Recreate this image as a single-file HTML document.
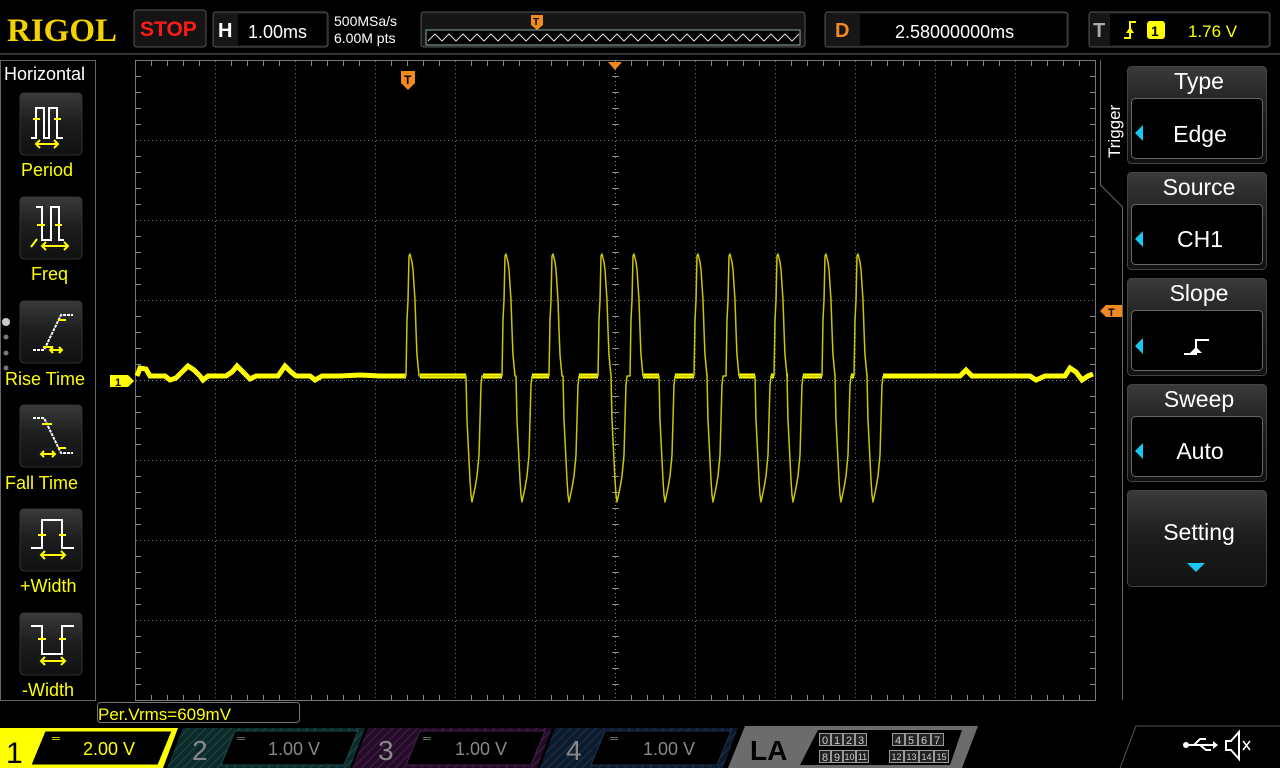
<!DOCTYPE html>
<html><head><meta charset="utf-8"><style>
html,body{margin:0;padding:0;background:#000;width:1280px;height:768px;overflow:hidden}
svg{display:block}
text{font-family:"Liberation Sans",sans-serif}
</style></head><body>
<svg width="1280" height="768" viewBox="0 0 1280 768" xmlns="http://www.w3.org/2000/svg">
<defs>
<linearGradient id="btn" x1="0" y1="0" x2="0" y2="1"><stop offset="0" stop-color="#3a3a3a"/><stop offset="0.5" stop-color="#1c1c1c"/><stop offset="1" stop-color="#111"/></linearGradient>
<pattern id="h2" width="6" height="6" patternUnits="userSpaceOnUse" patternTransform="rotate(45)"><rect width="6" height="6" fill="#0c2a2a"/><line x1="0" y1="0" x2="0" y2="6" stroke="#1d4a48" stroke-width="2"/></pattern>
<pattern id="h3" width="6" height="6" patternUnits="userSpaceOnUse" patternTransform="rotate(45)"><rect width="6" height="6" fill="#240c28"/><line x1="0" y1="0" x2="0" y2="6" stroke="#45204a" stroke-width="2"/></pattern>
<pattern id="h4" width="6" height="6" patternUnits="userSpaceOnUse" patternTransform="rotate(45)"><rect width="6" height="6" fill="#0c1a2c"/><line x1="0" y1="0" x2="0" y2="6" stroke="#1c3250" stroke-width="2"/></pattern>
<clipPath id="zz"><rect x="427" y="30" width="372" height="15"/></clipPath>
</defs>
<rect width="1280" height="768" fill="#000"/>

<!-- TOP BAR -->
<text x="7" y="41" style="font-family:'Liberation Serif',serif;font-weight:bold;font-size:33px" fill="#f2d200">RIGOL</text>
<rect x="134" y="10" width="72" height="37" rx="3" fill="#141414" stroke="#555"/>
<text x="140" y="36" font-size="21" font-weight="bold" fill="#ff1a1a">STOP</text>
<rect x="213" y="12" width="115" height="35" rx="3" fill="#161616" stroke="#555"/>
<rect x="238" y="14" width="88" height="31" fill="#000"/>
<text x="218" y="37" font-size="20" font-weight="bold" fill="#fff">H</text>
<text x="248" y="38" font-size="18" fill="#fff">1.00ms</text>
<text x="334" y="26" font-size="14" fill="#fff">500MSa/s</text>
<text x="334" y="43" font-size="14" fill="#fff">6.00M pts</text>
<rect x="421" y="12" width="384" height="35" rx="3" fill="#161616" stroke="#555"/>
<rect x="426" y="30" width="374" height="15" fill="#000" stroke="#8aa"/>
<g clip-path="url(#zz)">
<path d="M428,41 l7,-7 l7,7 l7,-7 l7,7 l7,-7 l7,7 l7,-7 l7,7 l7,-7 l7,7 l7,-7 l7,7 l7,-7 l7,7 l7,-7 l7,7 l7,-7 l7,7 l7,-7 l7,7 l7,-7 l7,7 l7,-7 l7,7 l7,-7 l7,7 l7,-7 l7,7 l7,-7 l7,7 l7,-7 l7,7 l7,-7 l7,7 l7,-7 l7,7 l7,-7 l7,7 l7,-7 l7,7 l7,-7 l7,7 l7,-7 l7,7 l7,-7 l7,7 l7,-7 l7,7 l7,-7 l7,7 l7,-7 l7,7 l7,-7 l7,7 l7,-7 l7,7" fill="none" stroke="#ddd" stroke-width="1"/>
</g>
<path d="M531,15 h12 v10 l-6,5 l-6,-5z" fill="#f08a20"/><text x="533" y="25" font-size="10" font-weight="bold" fill="#000">T</text>
<rect x="825" y="12" width="243" height="35" rx="3" fill="#161616" stroke="#555"/>
<rect x="860" y="14" width="206" height="31" fill="#000"/>
<text x="835" y="37" font-size="20" font-weight="bold" fill="#f08a20">D</text>
<text x="895" y="38" font-size="18" fill="#fff">2.58000000ms</text>
<rect x="1089" y="12" width="181" height="35" rx="3" fill="#161616" stroke="#555"/>
<rect x="1110" y="14" width="158" height="31" fill="#000"/>
<text x="1093" y="37" font-size="20" font-weight="bold" fill="#aaa">T</text>
<path d="M1124,38 h6 v-16 h6" stroke="#ff0" stroke-width="2" fill="none"/>
<path d="M1126,33 l4,-6 l4,6z" fill="#ff0"/>
<rect x="1147" y="21" width="18" height="18" rx="3" fill="#ff0"/><text x="1151" y="36" font-size="14" font-weight="bold" fill="#000">1</text>
<text x="1188" y="37" font-size="17" fill="#ff0">1.76 V</text>
<line x1="0" y1="54" x2="1280" y2="54" stroke="#333" stroke-width="2"/>

<!-- LEFT PANEL -->
<rect x="0.5" y="60.5" width="95" height="640" fill="#000" stroke="#666"/>
<text x="4" y="80" font-size="18" fill="#fff">Horizontal</text>
<g>
<rect x="20" y="93" width="62" height="62" rx="4" fill="url(#btn)" stroke="#333"/>
<path d="M31,138 h5 v-30 h8 v30 h5 v-30 h8 v30 h6" fill="none" stroke="#fff" stroke-width="2"/>
<path d="M33,119 h7 M54,119 h7 M37,144 h20 M40,140 l-4,4 l4,4 M54,140 l4,4 l-4,4" stroke="#ff0" stroke-width="2" fill="none"/>
<text x="21" y="176" font-size="18" fill="#ff0">Period</text>

<rect x="20" y="197" width="62" height="62" rx="4" fill="url(#btn)" stroke="#333"/>
<path d="M36,207 h6 v33 h9 v-33 h8 v33 h5" fill="none" stroke="#fff" stroke-width="2"/>
<path d="M37,225 h8 M55,225 h7 M43,246 h24 M46,242 l-4,4 l4,4 M64,242 l4,4 l-4,4 M31,247 l6,-8" stroke="#ff0" stroke-width="2" fill="none"/>
<text x="31" y="280" font-size="18" fill="#ff0">Freq</text>

<rect x="20" y="301" width="62" height="62" rx="4" fill="url(#btn)" stroke="#333"/>
<path d="M33,350 h11 l17,-35 h12" fill="none" stroke="#fff" stroke-width="2" stroke-dasharray="3,1"/>
<path d="M43,347 h10 M58,320 h8 M50,350 h12 M53,347 l-3,3 l3,3 M59,347 l3,3 l-3,3" stroke="#ff0" stroke-width="2" fill="none"/>
<text x="5" y="385" font-size="18" fill="#ff0">Rise Time</text>
<circle cx="6" cy="322" r="4" fill="#ccc"/><circle cx="6" cy="337" r="2.5" fill="#777"/><circle cx="6" cy="353" r="2.5" fill="#777"/><circle cx="6" cy="368" r="2.5" fill="#777"/>

<rect x="20" y="405" width="62" height="62" rx="4" fill="url(#btn)" stroke="#333"/>
<path d="M33,418 h11 l17,35 h12" fill="none" stroke="#fff" stroke-width="2" stroke-dasharray="3,1"/>
<path d="M42,424 h10 M58,448 h8 M41,454 h14 M44,451 l-3,3 l3,3 M52,451 l3,3 l-3,3" stroke="#ff0" stroke-width="2" fill="none"/>
<text x="5" y="489" font-size="18" fill="#ff0">Fall Time</text>

<rect x="20" y="509" width="62" height="62" rx="4" fill="url(#btn)" stroke="#333"/>
<path d="M31,548 h11 v-28 h20 v28 h12" fill="none" stroke="#fff" stroke-width="2"/>
<path d="M38,535 h8 M59,535 h7 M42,555 h22 M45,551 l-4,4 l4,4 M61,551 l4,4 l-4,4" stroke="#ff0" stroke-width="2" fill="none"/>
<text x="20" y="592" font-size="18" fill="#ff0">+Width</text>

<rect x="20" y="613" width="62" height="62" rx="4" fill="url(#btn)" stroke="#333"/>
<path d="M31,626 h11 v28 h20 v-28 h12" fill="none" stroke="#fff" stroke-width="2"/>
<path d="M38,639 h8 M59,639 h7 M42,661 h22 M45,657 l-4,4 l4,4 M61,657 l4,4 l-4,4" stroke="#ff0" stroke-width="2" fill="none"/>
<text x="22" y="696" font-size="18" fill="#ff0">-Width</text>
</g>

<!-- GRID -->
<rect x="135.5" y="60.5" width="960" height="640" fill="none" stroke="#777"/>
<g stroke="#6a6a6a" stroke-width="1" stroke-dasharray="1,3">
<path d="M215.5,61v639M295.5,61v639M375.5,61v639M455.5,61v639M535.5,61v639M695.5,61v639M775.5,61v639M855.5,61v639M935.5,61v639M1015.5,61v639"/>
<path d="M136,140.5h959M136,220.5h959M136,300.5h959M136,460.5h959M136,540.5h959M136,620.5h959"/>
</g>
<g stroke="#888" stroke-width="1">
<path d="M615.5,61v639M136,380.5h959" stroke-dasharray="1,3"/>
</g>
<g stroke="#888" stroke-width="1">
<path d="M151.5,61v5M167.5,61v5M183.5,61v5M199.5,61v5M231.5,61v5M247.5,61v5M263.5,61v5M279.5,61v5M311.5,61v5M327.5,61v5M343.5,61v5M359.5,61v5M391.5,61v5M407.5,61v5M423.5,61v5M439.5,61v5M471.5,61v5M487.5,61v5M503.5,61v5M519.5,61v5M551.5,61v5M567.5,61v5M583.5,61v5M599.5,61v5M631.5,61v5M647.5,61v5M663.5,61v5M679.5,61v5M711.5,61v5M727.5,61v5M743.5,61v5M759.5,61v5M791.5,61v5M807.5,61v5M823.5,61v5M839.5,61v5M871.5,61v5M887.5,61v5M903.5,61v5M919.5,61v5M951.5,61v5M967.5,61v5M983.5,61v5M999.5,61v5M1031.5,61v5M1047.5,61v5M1063.5,61v5M1079.5,61v5"/>
<path d="M151.5,695v5M167.5,695v5M183.5,695v5M199.5,695v5M231.5,695v5M247.5,695v5M263.5,695v5M279.5,695v5M311.5,695v5M327.5,695v5M343.5,695v5M359.5,695v5M391.5,695v5M407.5,695v5M423.5,695v5M439.5,695v5M471.5,695v5M487.5,695v5M503.5,695v5M519.5,695v5M551.5,695v5M567.5,695v5M583.5,695v5M599.5,695v5M631.5,695v5M647.5,695v5M663.5,695v5M679.5,695v5M711.5,695v5M727.5,695v5M743.5,695v5M759.5,695v5M791.5,695v5M807.5,695v5M823.5,695v5M839.5,695v5M871.5,695v5M887.5,695v5M903.5,695v5M919.5,695v5M951.5,695v5M967.5,695v5M983.5,695v5M999.5,695v5M1031.5,695v5M1047.5,695v5M1063.5,695v5M1079.5,695v5"/>
<path d="M136,76.5h5M136,92.5h5M136,108.5h5M136,124.5h5M136,156.5h5M136,172.5h5M136,188.5h5M136,204.5h5M136,236.5h5M136,252.5h5M136,268.5h5M136,284.5h5M136,316.5h5M136,332.5h5M136,348.5h5M136,364.5h5M136,396.5h5M136,412.5h5M136,428.5h5M136,444.5h5M136,476.5h5M136,492.5h5M136,508.5h5M136,524.5h5M136,556.5h5M136,572.5h5M136,588.5h5M136,604.5h5M136,636.5h5M136,652.5h5M136,668.5h5M136,684.5h5"/>
<path d="M1090,76.5h5M1090,92.5h5M1090,108.5h5M1090,124.5h5M1090,156.5h5M1090,172.5h5M1090,188.5h5M1090,204.5h5M1090,236.5h5M1090,252.5h5M1090,268.5h5M1090,284.5h5M1090,316.5h5M1090,332.5h5M1090,348.5h5M1090,364.5h5M1090,396.5h5M1090,412.5h5M1090,428.5h5M1090,444.5h5M1090,476.5h5M1090,492.5h5M1090,508.5h5M1090,524.5h5M1090,556.5h5M1090,572.5h5M1090,588.5h5M1090,604.5h5M1090,636.5h5M1090,652.5h5M1090,668.5h5M1090,684.5h5"/>
<path d="M612,76.5h7M612,92.5h7M612,108.5h7M612,124.5h7M612,156.5h7M612,172.5h7M612,188.5h7M612,204.5h7M612,236.5h7M612,252.5h7M612,268.5h7M612,284.5h7M612,316.5h7M612,332.5h7M612,348.5h7M612,364.5h7M612,396.5h7M612,412.5h7M612,428.5h7M612,444.5h7M612,476.5h7M612,492.5h7M612,508.5h7M612,524.5h7M612,556.5h7M612,572.5h7M612,588.5h7M612,604.5h7M612,636.5h7M612,652.5h7M612,668.5h7M612,684.5h7"/>
</g>

<!-- markers -->
<path d="M608,62 h14 l-7,8z" fill="#f08a20"/>
<path d="M401,71 h14 v12 l-7,7 l-7,-7z" fill="#f08a20"/><text x="404" y="84" font-size="12" font-weight="bold" fill="#000">T</text>
<path d="M1122,305 h-16 l-6,6 l6,6 h16z" fill="#f08a20"/><text x="1108" y="316" font-size="11" font-weight="bold" fill="#000">T</text>
<path d="M110,375 h18 l6,6 l-6,6 h-18z" fill="#ff0"/><text x="115" y="386" font-size="11" font-weight="bold" fill="#000">1</text>

<!-- WAVEFORM -->
<path d="M137,376 L140,368 L146,369 L150,376 L165,376 L170,380 L176,378 L182,372 L188,366 L194,370 L200,376 L203,380 L208,376 L226,376 L232,372 L237,366 L243,372 L250,379 L256,376 L278,376 L285,366 L291,372 L296,376 L310,376 L315,380 L322,376 L340,376 L360,375 L380,376 L404,376 L406,376" fill="none" stroke="#ff0" stroke-width="5"/>
<path d="M420,376 L466,376 M483,376 L502,376 M532,376 L549,376 M579,376 L598,376 M643,376 L659,376 M675,376 L694,376 M739,376 L755,376 M771,376 L774,376 M787,376 L788,376 M803,376 L822,376 M851,376 L854,376 M883,376 L960,376 L966,370 L972,376 L1030,376 L1036,380 L1045,376 L1065,376 L1070,368 L1076,372 L1082,380 L1088,376 L1093,374" fill="none" stroke="#ff0" stroke-width="5"/>
<path fill="none" stroke="#c8c800" stroke-width="1.5" stroke-linejoin="round" d="M404,376 L406,376 L407,320 L408,300 L409,256 L410,254 L412,262 L413,270 L415,300 L416,330 L417,355 L419,376
L466,376 L467,420 L468,440 L470,480 L471,495 L472,502 L475,488 L477,476 L479,455 L480,420 L481,385 L482,376
L502,376 L503,320 L504,300 L505,256 L506,254 L508,262 L509,270 L511,300 L512,330 L513,355 L515,376
L516,376 L517,420 L518,440 L520,480 L521,495 L522,502 L525,488 L527,476 L529,455 L530,420 L531,385 L532,376
L549,376 L550,320 L551,300 L552,256 L553,254 L555,262 L556,270 L558,300 L559,330 L560,355 L562,376
L563,376 L564,420 L565,440 L567,480 L568,495 L569,502 L572,488 L574,476 L576,455 L577,420 L578,385 L579,376
L598,376 L599,320 L600,300 L601,256 L602,254 L604,262 L605,270 L607,300 L608,330 L609,355 L611,376
L612,420 L613,440 L615,480 L616,495 L617,502 L620,488 L622,476 L624,455 L625,420 L626,385 L627,376
L630,376 L631,320 L632,300 L633,256 L634,254 L636,262 L637,270 L639,300 L640,330 L641,355 L643,376
L659,376 L660,420 L661,440 L663,480 L664,495 L665,502 L668,488 L670,476 L672,455 L673,420 L674,385 L675,376
L694,376 L695,320 L696,300 L697,256 L698,254 L700,262 L701,270 L703,300 L704,330 L705,355 L707,376
L708,420 L709,440 L711,480 L712,495 L713,502 L716,488 L718,476 L720,455 L721,420 L722,385 L723,376
L726,376 L727,320 L728,300 L729,256 L730,254 L732,262 L733,270 L735,300 L736,330 L737,355 L739,376
L755,376 L756,420 L757,440 L759,480 L760,495 L761,502 L764,488 L766,476 L768,455 L769,420 L770,385 L771,376
L774,376 L775,320 L776,300 L777,256 L778,254 L780,262 L781,270 L783,300 L784,330 L785,355 L787,376
L788,420 L789,440 L791,480 L792,495 L793,502 L796,488 L798,476 L800,455 L801,420 L802,385 L803,376
L822,376 L823,320 L824,300 L825,256 L826,254 L828,262 L829,270 L831,300 L832,330 L833,355 L835,376
L836,420 L837,440 L839,480 L840,495 L841,502 L844,488 L846,476 L848,455 L849,420 L850,385 L851,376
L854,376 L855,320 L856,300 L857,256 L858,254 L860,262 L861,270 L863,300 L864,330 L865,355 L867,376
L868,420 L869,440 L871,480 L872,495 L873,502 L876,488 L878,476 L880,455 L881,420 L882,385 L883,376"/>

<!-- RIGHT PANEL -->
<path d="M1100.5,60 V185 L1122.5,207 V700" fill="none" stroke="#666"/>
<text transform="translate(1120,158) rotate(-90)" font-size="17" fill="#fff">Trigger</text>
<g font-size="23" fill="#fff" text-anchor="middle">
<rect x="1127.5" y="66.5" width="139" height="97" rx="4" fill="url(#btn)" stroke="#444"/>
<text x="1199" y="89">Type</text>
<rect x="1131.5" y="98.5" width="131" height="60" rx="4" fill="#000" stroke="#666"/>
<text x="1200" y="142">Edge</text>
<rect x="1127.5" y="172.5" width="139" height="97" rx="4" fill="url(#btn)" stroke="#444"/>
<text x="1199" y="195">Source</text>
<rect x="1131.5" y="204.5" width="131" height="60" rx="4" fill="#000" stroke="#666"/>
<text x="1200" y="247">CH1</text>
<rect x="1127.5" y="278.5" width="139" height="97" rx="4" fill="url(#btn)" stroke="#444"/>
<text x="1199" y="301">Slope</text>
<rect x="1131.5" y="310.5" width="131" height="60" rx="4" fill="#000" stroke="#666"/>
<rect x="1127.5" y="384.5" width="139" height="97" rx="4" fill="url(#btn)" stroke="#444"/>
<text x="1199" y="407">Sweep</text>
<rect x="1131.5" y="416.5" width="131" height="60" rx="4" fill="#000" stroke="#666"/>
<text x="1200" y="459">Auto</text>
<rect x="1127.5" y="490.5" width="139" height="96" rx="4" fill="url(#btn)" stroke="#444"/>
<text x="1199" y="540">Setting</text>
</g>
<path d="M1143,125 l-8,8 l8,8z M1143,231 l-8,8 l8,8z M1143,338 l-8,8 l8,8z M1143,443 l-8,8 l8,8z M1187,563 h18 l-9,9z" fill="#19c8f0"/>
<path d="M1184,354 h12 v-14 h13" fill="none" stroke="#fff" stroke-width="2"/>
<path d="M1196,347 l-6,6 h12z" fill="#fff"/>

<!-- MEASUREMENT -->
<rect x="97.5" y="702.5" width="202" height="20" rx="3" fill="#000" stroke="#777"/>
<text x="98" y="720" font-size="17" fill="#ff0">Per.Vrms=609mV</text>

<!-- BOTTOM BAR -->
<path d="M0,728 H178 L163,768 H0z" fill="#ff0"/>
<path d="M45,731 H172 L158,765 H31z" fill="#000" stroke="#ff0" stroke-width="1"/>
<text x="6" y="763" font-size="30" fill="#000">1</text>
<text x="52" y="742" font-size="11" fill="#ff0">═</text>
<text x="83" y="755" font-size="18" fill="#ff0">2.00 V</text>

<path d="M183,728 H365 L350,768 H167z" fill="url(#h2)"/>
<path d="M235,731 H358 L344,765 H221z" fill="#000" stroke="#1d4a48"/>
<text x="192" y="760" font-size="28" fill="#888">2</text>
<text x="237" y="742" font-size="11" fill="#888">═</text>
<text x="268" y="755" font-size="18" fill="#888">1.00 V</text>

<path d="M368,728 H552 L537,768 H352z" fill="url(#h3)"/>
<path d="M420,731 H545 L531,765 H406z" fill="#000" stroke="#45204a"/>
<text x="378" y="760" font-size="28" fill="#888">3</text>
<text x="423" y="742" font-size="11" fill="#888">═</text>
<text x="455" y="755" font-size="18" fill="#888">1.00 V</text>

<path d="M555,728 H738 L723,768 H540z" fill="url(#h4)"/>
<path d="M605,731 H731 L717,765 H591z" fill="#000" stroke="#1c3250"/>
<text x="566" y="760" font-size="28" fill="#888">4</text>
<text x="610" y="742" font-size="11" fill="#888">═</text>
<text x="643" y="755" font-size="18" fill="#888">1.00 V</text>

<path d="M745,726 H978 L962,768 H728z" fill="#6c6c6c"/>
<path d="M818,730 H962 L950,765 H800z" fill="#000"/>
<text x="750" y="760" font-size="28" font-weight="bold" fill="#000">LA</text>
<g stroke="#999" fill="#222" stroke-width="1">
<path d="M819.5,733.5h11v12h-11zM831.5,733.5h11v12h-11zM843.5,733.5h11v12h-11zM855.5,733.5h11v12h-11zM892.5,733.5h12v12h-12zM905.5,733.5h12v12h-12zM918.5,733.5h12v12h-12zM931.5,733.5h12v12h-12z"/>
<path d="M819.5,750.5h11v12h-11zM831.5,750.5h11v12h-11zM843.5,750.5h12v12h-12zM856.5,750.5h12v12h-12zM889.5,750.5h14v12h-14zM904.5,750.5h14v12h-14zM919.5,750.5h14v12h-14zM934.5,750.5h14v12h-14z"/>
</g>
<g font-size="11" fill="#ccc" text-anchor="middle">
<text x="825" y="744">0</text><text x="837" y="744">1</text><text x="849" y="744">2</text><text x="861" y="744">3</text>
<text x="898" y="744">4</text><text x="911" y="744">5</text><text x="924" y="744">6</text><text x="937" y="744">7</text>
<text x="825" y="761">8</text><text x="837" y="761">9</text>
</g>
<g font-size="9" fill="#ccc" text-anchor="middle">
<text x="849.5" y="760">10</text><text x="862.5" y="760">11</text>
<text x="896.5" y="760">12</text><text x="911.5" y="760">13</text><text x="926.5" y="760">14</text><text x="941.5" y="760">15</text>
</g>

<path d="M1120,768 L1136,726 H1280" fill="none" stroke="#555"/>
<path d="M1185,745 h28 M1194,745 l6,-6 h6 M1200,745 l6,5 h5" stroke="#fff" stroke-width="2" fill="none"/>
<circle cx="1186" cy="745" r="3" fill="#fff"/><path d="M1213,741 l5,4 l-5,4z" fill="#fff"/>
<path d="M1226,741 h5 l8,-9 v27 l-8,-9 h-5z" fill="none" stroke="#fff" stroke-width="2"/>
<path d="M1243,741 l7,9 M1250,741 l-7,9" stroke="#fff" stroke-width="1.5"/>
</svg>
</body></html>
